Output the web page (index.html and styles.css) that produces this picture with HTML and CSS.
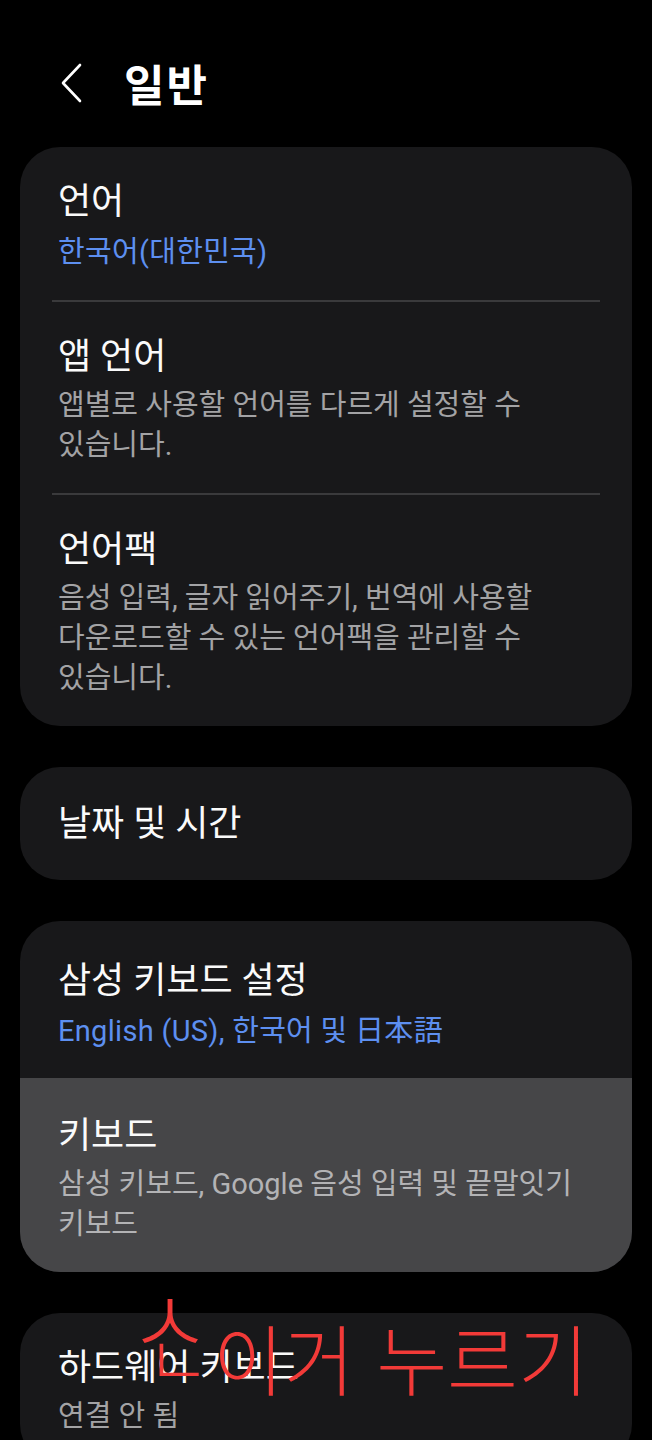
FILE: index.html
```html
<!DOCTYPE html>
<html lang="ko">
<head>
<meta charset="utf-8">
<title>일반</title>
<link rel="stylesheet" href="styles.css">
</head>
<body>
<div class="screen">
  <header class="header">
    <span class="back">
      <svg width="22" height="40" viewBox="0 0 22 40"><path d="M20 2 L3 20 L20 38" fill="none" stroke="#fff" stroke-width="2.6" stroke-linecap="round" stroke-linejoin="round"/></svg>
    </span>
    <h1 class="page-title">일반</h1>
  </header>

  <main class="list">
    <section class="card">
      <div class="item">
        <div class="item-title">언어</div>
        <div class="item-sub blue">한국어(대한민국)</div>
      </div>
      <div class="divider"></div>
      <div class="item">
        <div class="item-title">앱 언어</div>
        <div class="item-sub">앱별로 사용할 언어를 다르게 설정할 수 있습니다.</div>
      </div>
      <div class="divider"></div>
      <div class="item">
        <div class="item-title">언어팩</div>
        <div class="item-sub">음성 입력, 글자 읽어주기, 번역에 사용할 다운로드할 수 있는 언어팩을 관리할 수 있습니다.</div>
      </div>
    </section>

    <section class="card">
      <div class="item single">
        <div class="item-title">날짜 및 시간</div>
      </div>
    </section>

    <section class="card">
      <div class="item tall">
        <div class="item-title">삼성 키보드 설정</div>
        <div class="item-sub blue">English (US), 한국어 및 日本語</div>
      </div>
      <div class="divider"></div>
      <div class="item pressed">
        <div class="item-title">키보드</div>
        <div class="item-sub">삼성 키보드, Google 음성 입력 및 끝말잇기 키보드</div>
      </div>
    </section>

    <section class="card">
      <div class="item">
        <div class="item-title">하드웨어 키보드</div>
        <div class="item-sub">연결 안 됨</div>
      </div>
    </section>
  </main>

  <div class="note">
    <span class="note-up">ㅅ</span>
    <span class="note-l">ㄴ</span>
    <span class="note-text">이거 누르기</span>
  </div>
</div>
</body>
</html>
```

FILE: styles.css
```css
html, body {
  margin: 0;
  padding: 0;
  background: #000;
}

body {
  font-family: Roboto, "Noto Sans CJK KR", sans-serif;
  color: #fafafa;
  width: 652px;
  height: 1440px;
  overflow: hidden;
  word-break: keep-all;
}

.screen {
  position: relative;
  width: 652px;
}

.header {
  display: flex;
  align-items: center;
  height: 50px;
  padding: 58px 0 39px 0;
}

.back {
  display: flex;
  width: 22px;
  height: 40px;
  margin-left: 60px;
  margin-right: 42px;
}

.page-title {
  margin: 0;
  font-size: 44px;
  font-weight: 700;
  line-height: 50px;
  letter-spacing: 2px;
  color: #fff;
  font-family: "Noto Sans CJK KR", sans-serif;
}

.list {
  display: flex;
  flex-direction: column;
  gap: 41px;
  padding: 0 20px;
}

.card {
  background: #18181a;
  border-radius: 40px;
  overflow: hidden;
  display: flex;
  flex-direction: column;
}

.item {
  padding: 32px 38px 28px 38px;
}

.item.single {
  padding: 34px 38px 33px 38px;
}

.item.tall {
  padding-top: 37px;
  padding-bottom: 27px;
}

.item.pressed {
  background: #464648;
  margin-top: -2px;
  padding-top: 35px;
  padding-bottom: 28px;
}

.item-title {
  font-size: 36px;
  line-height: 46px;
  color: #fafafa;
}

.item-sub {
  margin-top: 5px;
  font-size: 29px;
  line-height: 40px;
  color: #a3a3a5;
}

.pressed .item-sub {
  color: #b3b3b5;
}

.item-sub.blue {
  color: #5d8ff0;
  margin-top: 7px;
  letter-spacing: 0.3px;
}

.divider {
  height: 2px;
  margin: 0 32px;
  background: #3a3a3c;
}

.note {
  position: absolute;
  left: 0;
  top: 1280px;
  width: 652px;
  height: 140px;
  color: #f23a38;
  font-family: "Noto Sans CJK KR", sans-serif;
  font-weight: 300;
  pointer-events: none;
}

.note-up {
  position: absolute;
  left: 128px;
  top: -14px;
  font-size: 90px;
  line-height: 100px;
}

.note-l {
  position: absolute;
  left: 146px;
  top: 36px;
  font-size: 70px;
  line-height: 80px;
}

.note-text {
  position: absolute;
  left: 213px;
  top: 37px;
  font-size: 77px;
  line-height: 80px;
  white-space: nowrap;
}
```
